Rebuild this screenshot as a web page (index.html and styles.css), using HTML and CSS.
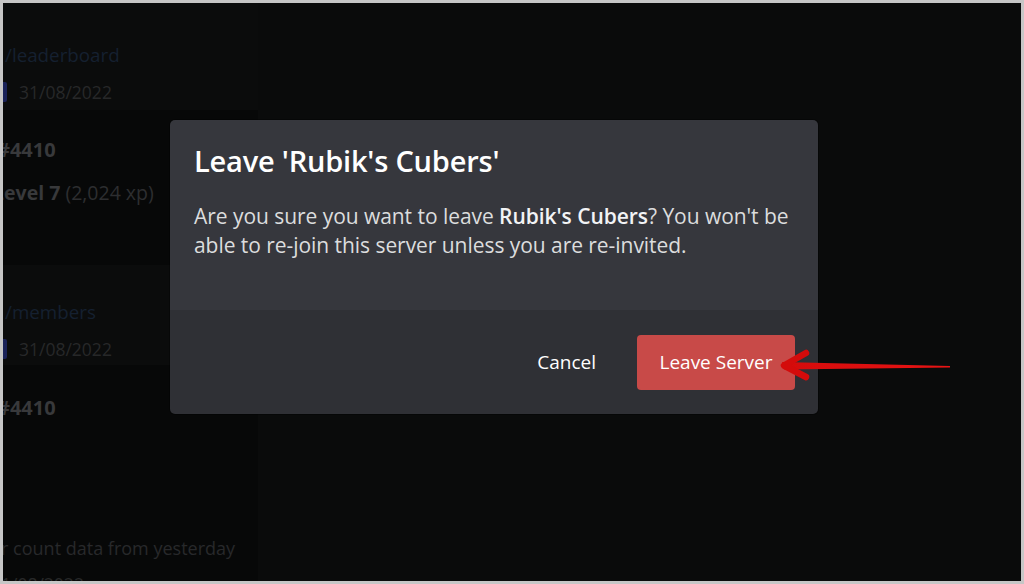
FILE: index.html
```html
<!DOCTYPE html>
<html>
<head>
  <meta charset="UTF-8">
  <title>Leave Server</title>
  <link rel="stylesheet" href="styles.css">
</head>
<body>
  <div class="frame">
    <!-- Dimmed channel content behind the modal -->
    <div class="channel">
      <div class="embed-head">
        <div class="link">/leaderboard</div>
        <div class="date-row"><span class="date-bar"></span>31/08/2022</div>
      </div>
      <div class="embed-body first">
        <div class="user">user#4410</div>
        <div class="level"><b>Level 7</b> (2,024 xp)</div>
      </div>
      <div class="embed-head second">
        <div class="link">/members</div>
        <div class="date-row"><span class="date-bar"></span>31/08/2022</div>
      </div>
      <div class="embed-body last">
        <div class="user">user#4410</div>
        <div class="note">Member count data from yesterday</div>
        <div class="date-row plain">31/08/2022</div>
      </div>
    </div>
    <div class="main"></div>

    <!-- Leave server confirmation -->
    <div class="modal">
      <div class="modal-top">
        <h2>Leave 'Rubik's Cubers'</h2>
        <p>Are you sure you want to leave <b>Rubik's Cubers</b>? You won't be able to re-join this server unless you are re-invited.</p>
      </div>
      <div class="modal-footer">
        <button class="btn-cancel">Cancel</button>
        <button class="btn-leave">Leave Server</button>
      </div>
    </div>

    <!-- Annotation arrow -->
    <svg class="arrow" width="180" height="40" viewBox="0 0 180 40">
      <defs>
        <linearGradient id="shaft" x1="0" y1="0" x2="1" y2="0">
          <stop offset="0" stop-color="#d40b0b"/>
          <stop offset="1" stop-color="#e81414"/>
        </linearGradient>
      </defs>
      <path d="M4 16 L172 20 L172 21.5 L6 23.5 Z" fill="url(#shaft)"/>
      <path d="M28 7 L6 19.5 L28 31" fill="none" stroke="#d40b0b" stroke-width="6.5" stroke-linecap="round" stroke-linejoin="round"/>
    </svg>
  </div>
</body>
</html>
```

FILE: styles.css
```css
/* Global */
body {
  margin: 0;
  padding: 0;
  background-color: #fff;
  font-family: "Open Sans", "Noto Sans", sans-serif;
}
.frame {
  position: relative;
  width: 1024px;
  height: 584px;
  box-sizing: border-box;
  border: 3px solid #c6c6c6;
  background-color: #0a0b0b;
  display: flex;
  overflow: hidden;
}
/* Background channel */
.channel {
  width: 255px;
  background-color: #070808;
  display: flex;
  flex-direction: column;
  overflow: hidden;
  font-size: 19.5px;
  line-height: 24px;
}
.main {
  flex: 1;
}
.embed-head {
  background-color: #0b0c0c;
  height: 107px;
  padding-top: 40px;
  box-sizing: border-box;
}
.embed-head.second {
  height: 100px;
  padding-top: 35px;
}
.link {
  color: #152030;
  font-size: 18.8px;
  padding-left: 2px;
}
.date-row {
  display: flex;
  align-items: center;
  margin-top: 13px;
  font-size: 17.5px;
  color: #272829;
}
.date-bar {
  width: 4px;
  height: 20px;
  background-color: #1a2258;
  border-radius: 0 2px 2px 0;
  margin-right: 12px;
}
.embed-body {
  height: 155px;
  padding-top: 28px;
  box-sizing: border-box;
}
.embed-body.last {
  flex: 1;
  padding-top: 31px;
}
.user {
  margin-left: -50px;
  font-weight: bold;
  font-size: 20px;
  color: #38393b;
}
.level {
  margin-left: -10px;
  margin-top: 19px;
  color: #2d2e30;
}
.level b {
  color: #38393b;
}
.note {
  margin-left: -66px;
  margin-top: 116px;
  font-size: 18px;
  color: #28292b;
}
.date-row.plain {
  margin-left: -12px;
  margin-top: 12px;
}
/* Modal */
.modal {
  position: absolute;
  left: 167px;
  top: 117px;
  width: 648px;
  height: 294px;
  border-radius: 5px;
  overflow: hidden;
  display: flex;
  flex-direction: column;
  box-shadow: 0 0 0 1px rgba(0,0,0,0.3);
}
.modal-top {
  background-color: #36373d;
  height: 190px;
  padding: 24px 18px 0 24px;
  box-sizing: border-box;
}
.modal-top h2 {
  margin: 0;
  font-size: 29px;
  line-height: 34px;
  font-weight: 600;
  letter-spacing: -0.2px;
  color: #fff;
}
.modal-top p {
  margin: 24px 0 0;
  font-size: 21px;
  line-height: 29px;
  letter-spacing: -0.05px;
  color: #dcddde;
}
.modal-top p b {
  font-weight: 600;
  color: #f2f3f5;
}
.modal-footer {
  flex: 1;
  background-color: #2f3035;
  display: flex;
  align-items: center;
  justify-content: flex-end;
  padding-right: 23px;
}
.modal-footer button {
  font-family: "Open Sans", "Noto Sans", sans-serif;
  font-size: 19px;
  font-weight: 500;
  border: none;
  cursor: pointer;
}
.btn-cancel {
  background: none;
  color: #fff;
  padding: 0;
  margin-right: 41px;
}
.btn-leave {
  width: 158px;
  height: 55px;
  border-radius: 4px;
  background-color: #c84a48;
  color: #fff;
}
/* Annotation */
.arrow {
  position: absolute;
  left: 775px;
  top: 343px;
}
```
